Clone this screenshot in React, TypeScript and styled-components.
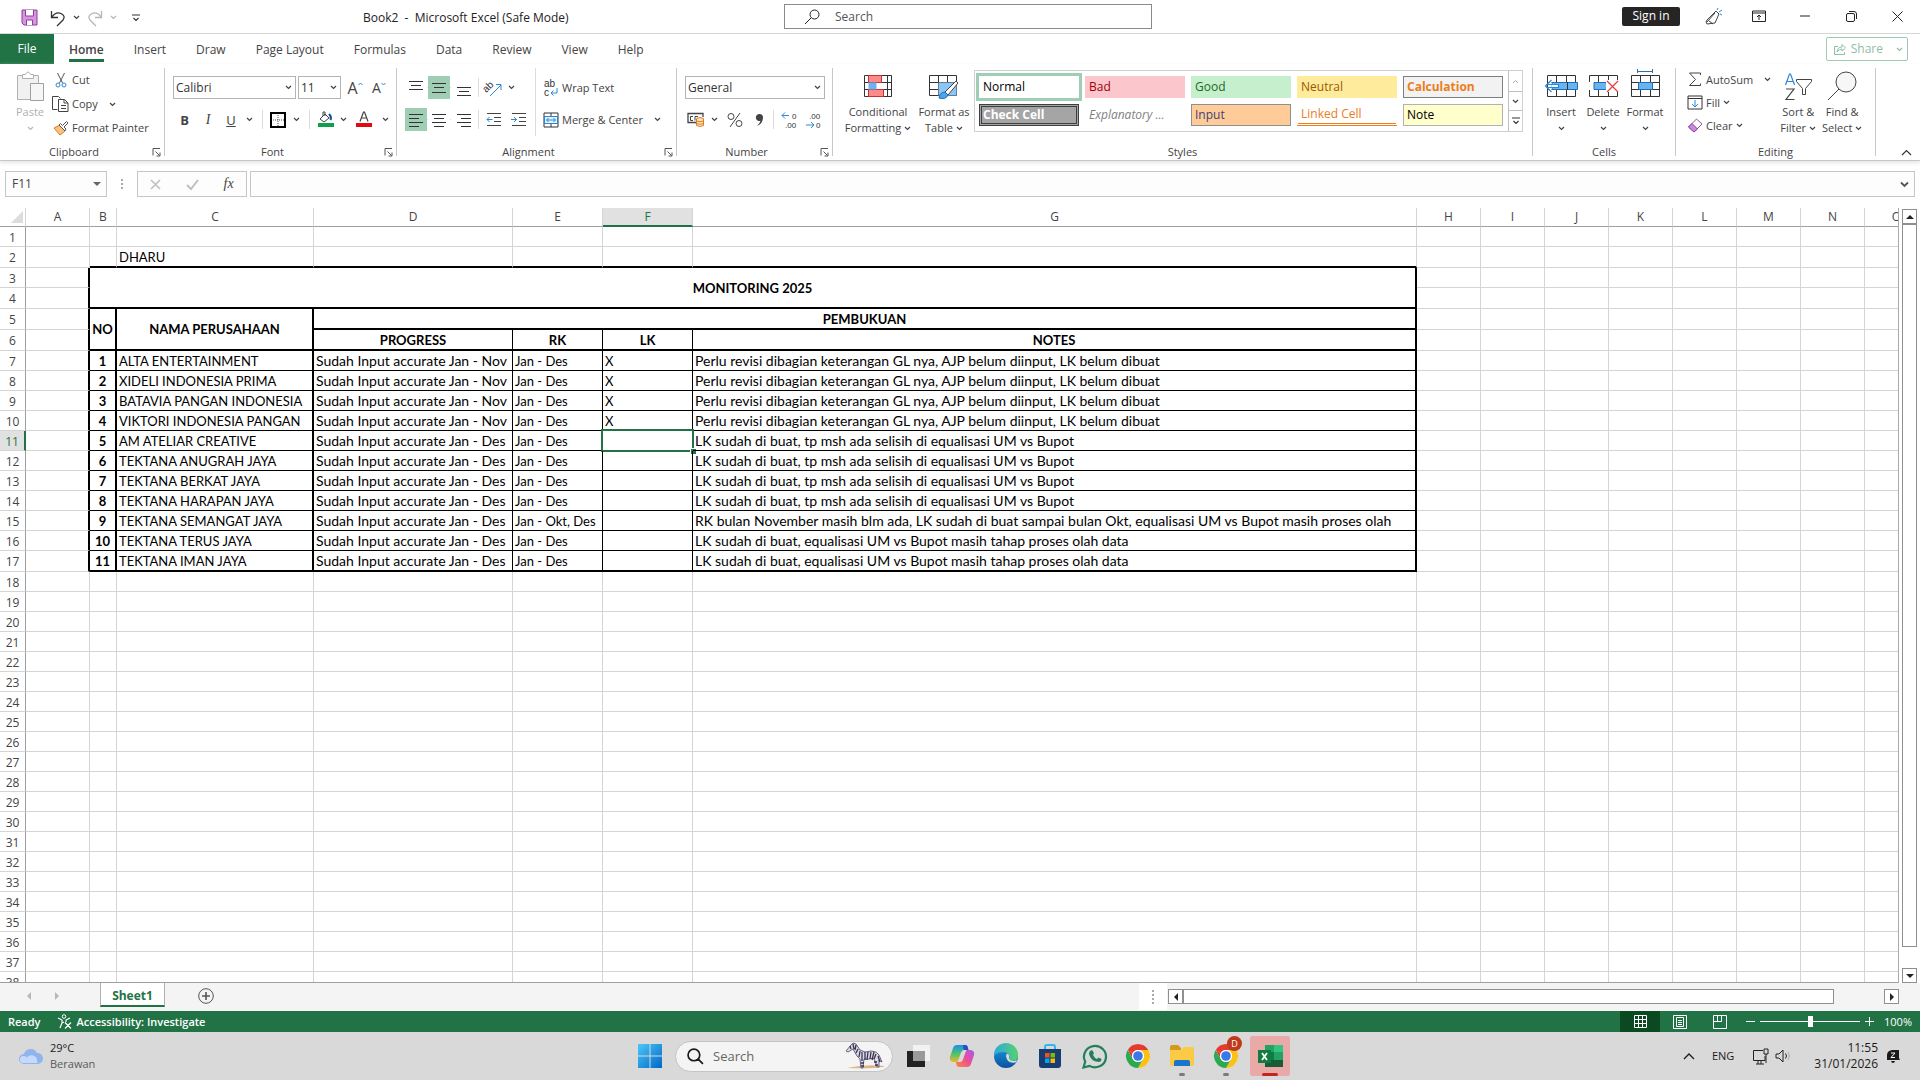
import React from "react";
import styled, { createGlobalStyle, css } from "styled-components";

const ui = `"Open Sans", "Noto Sans", "Liberation Sans", sans-serif`;
const sheetFont = `Lato, "Open Sans", "Liberation Sans", sans-serif`;
const green = "#217346";
const ink = "#444444";

const Global = createGlobalStyle`
  *, *::before, *::after { box-sizing: border-box; }
  html, body, #root { height: 100%; }
  body { margin: 0; font: 11px/16px ${ui}; color: ${ink}; background: #fff; overflow: hidden; }
  button, input, select { font: inherit; color: inherit; margin: 0; }
`;

/* ---------- shared parts ---------- */

const Window = styled.div`
  display: flex;
  flex-direction: column;
  height: 100vh;
`;
const Plain = styled.button<{ $fixed?: number }>`
  display: flex;
  align-items: center;
  justify-content: center;
  padding: 0;
  border: 0;
  background: none;
  white-space: nowrap;
  ${p => p.$fixed && css`width: ${p.$fixed}px;`}
`;
const Glyph = styled.svg`
  display: block;
  flex: none;
  fill: none;
  stroke: currentColor;
  overflow: visible;
  text { font-family: "Liberation Sans", sans-serif; stroke: none; fill: #333; }
`;
const Ico = ({ w, h, children }: { w: number; h: number; children: React.ReactNode }) => (
  <Glyph width={w} height={h} viewBox={`0 0 ${w} ${h}`} aria-hidden="true">{children}</Glyph>
);
const Chev = ({ c = ink }: { c?: string }) => (
  <Ico w={7} h={5}><path d="M1 1l2.5 2.5L6 1" stroke={c} strokeWidth="1.2" /></Ico>
);

/* ---------- title bar ---------- */

const TitleBar = styled.header`
  display: grid;
  grid-template-columns: 1fr 368px 1fr;
  height: 34px;
  flex: none;
  padding-left: 16px;
  border-bottom: 1px solid #d6d6d6;
  color: #222;
`;
const QuickAccess = styled.div`
  display: flex;
  align-items: center;
  padding: 2px 0 0 4px;
`;
const QuickButton = styled(Plain)<{ $w: number }>`
  width: ${p => p.$w}px;
  height: 22px;
`;
const DocTitle = styled.h1`
  flex: 1;
  margin: 0;
  padding-left: 208px;
  font-size: 12px;
  font-weight: 400;
  line-height: 18px;
  white-space: pre;
`;
const TitleSearch = styled.label`
  display: flex;
  align-items: center;
  gap: 15px;
  height: 25px;
  margin-top: 4px;
  padding-left: 19px;
  border: 1px solid #8a8a8a;
  input { flex: 1; border: 0; padding: 0; background: none; outline: 0; font-size: 12px; }
  input::placeholder { color: #555; opacity: 1; }
`;
const WindowTools = styled.div`
  display: flex;
  align-items: center;
  justify-content: flex-end;
  padding-bottom: 1px;
`;
const SignIn = styled(Plain)`
  width: 58px;
  height: 19px;
  margin-right: 10px;
  border-radius: 2px;
  background: #252525;
  color: #fff;
  font-size: 12px;
`;
const WinButton = styled(Plain)`
  width: 46px;
  height: 30px;
`;

/* ---------- tabs ---------- */

const TabBar = styled.nav`
  display: flex;
  height: 30px;
  flex: none;
  font-size: 12px;
  padding-right: 12px;
`;
const FileTab = styled(Plain)`
  width: 54px;
  background: ${green};
  color: #fff;
`;
const Tab = styled(Plain)<{ $on?: boolean }>`
  margin: 0 15px;
  padding-top: 1px;
  position: relative;
  ${p => p.$on && css`
    font-weight: 600;
    &::after { content: ""; position: absolute; left: 0; right: 0; bottom: 2px; height: 3px; background: ${green}; }
  `}
`;
const Share = styled(Plain)`
  gap: 5px;
  height: 24px;
  margin: 3px 0 0 auto;
  padding: 0 4px 0 7px;
  border: 1px solid #9fcdb3;
  border-radius: 2px;
  color: #8fbfa4;
  svg:last-child { margin-left: 8px; }
`;

/* ---------- ribbon ---------- */

const Ribbon = styled.section`
  display: flex;
  height: 97px;
  flex: none;
  padding-top: 4px;
  border-bottom: 1px solid #c6c6c6;
  box-shadow: 0 2px 4px #e4e4e4;
`;
const Group = styled.div<{ $w?: number }>`
  display: flex;
  flex-direction: column;
  ${p => (p.$w ? css`width: ${p.$w}px; flex: none;` : css`flex: 1;`)}
`;
const GroupBody = styled.div<{ $pad: number }>`
  display: flex;
  flex: 1;
  padding-left: ${p => p.$pad}px;
`;
const GroupLabel = styled.div`
  display: flex;
  align-items: center;
  height: 16px;
  span { flex: 1; text-align: center; }
`;
const Launcher = styled(Plain)`
  width: 16px;
  height: 16px;
`;
const Divider = styled.div`
  width: 1px;
  height: 88px;
  flex: none;
  background: #c8c8c8;
`;
const Lines = styled.div`
  display: flex;
  flex-direction: column;
  gap: 9px;
  padding-top: 8px;
`;
const Line = styled.div`
  display: flex;
  align-items: center;
  height: 23px;
`;
const Sep = styled.div<{ $h?: number; $m: number }>`
  width: 1px;
  height: ${p => p.$h || 19}px;
  margin: 0 ${p => p.$m}px;
  background: #dcdcdc;
`;
const Tool = styled(Plain)<{ $w?: number; $on?: boolean }>`
  width: ${p => p.$w || 24}px;
  height: 23px;
  font-size: 13px;
  background: ${p => (p.$on ? "#9fceb4" : "none")};
`;
const TextTool = styled(Plain)<{ $h?: number }>`
  height: ${p => p.$h || 23}px;
  gap: 3px;
  justify-content: flex-start;
`;
const IconBox = styled.span`
  display: flex;
  justify-content: center;
  width: 17px;
`;
const Tail = styled.span<{ $m: number }>`
  display: flex;
  margin-left: ${p => p.$m}px;
`;
const Stack = styled.div<{ $m: number }>`
  display: flex;
  flex-direction: column;
  margin-left: ${p => p.$m}px;
`;
const Big = styled(Plain)<{ $w: number; $dim?: boolean }>`
  flex-direction: column;
  justify-content: flex-start;
  width: ${p => p.$w}px;
  height: 76px;
  color: ${p => (p.$dim ? "#b0b0b0" : ink)};
`;
const BigIcon = styled.span`
  display: flex;
  align-items: center;
  height: 36px;
`;
const BigText = styled.span`
  display: flex;
  align-items: center;
  gap: 3px;
  height: 16px;
`;
const SelectWrap = styled.span<{ $w: number }>`
  display: flex;
  align-items: center;
  width: ${p => p.$w}px;
  height: 23px;
  margin-right: 2px;
  padding-right: 3px;
  border: 1px solid #b4b4b4;
  select { flex: 1; min-width: 0; height: 21px; padding: 0 0 0 2px; border: 0; appearance: none; background: none; color: #333; font-size: 12px; }
`;
const Letter = styled.span<{ $size: number }>`
  font-size: ${p => p.$size}px;
  line-height: 18px;
`;
const Slanted = styled.i`
  font: italic 14px/16px "Liberation Serif", serif;
`;

const Gallery = styled.div`
  display: flex;
  width: 549px;
  height: 62px;
  margin-top: 2px;
  border: 1px solid #d0d0d0;
`;
const Styles = styled.div`
  display: grid;
  flex: 1;
  grid-template-columns: repeat(5, 100px);
  grid-auto-rows: 22px;
  gap: 6px;
  padding: 5px 4px;
`;
const StyleItem = styled.button<{ $look: string }>`
  padding: 0 0 0 3px;
  border: 1px solid transparent;
  text-align: left;
  font: 12px/18px ${ui};
  white-space: nowrap;
  background: #fff;
  color: #000;
  ${p => p.$look}
`;
const Scrolls = styled.div`
  display: grid;
  grid-template-rows: 20px 19px 1fr;
  width: 14px;
  button { border-left: 1px solid #c0c0c0; }
  button + button { border-top: 1px solid #c0c0c0; }
`;
const RibbonEnd = styled.div`
  display: flex;
  width: 44px;
  align-items: flex-end;
  justify-content: flex-end;
  padding: 0 8px 4px 0;
`;

/* ---------- formula bar ---------- */

const FormulaBar = styled.section`
  display: flex;
  flex: none;
  padding: 10px 5px 11px;
  font-size: 12px;
`;
const Boxed = styled.div<{ $w?: number }>`
  display: flex;
  align-items: center;
  height: 26px;
  ${p => (p.$w ? css`width: ${p.$w}px;` : css`flex: 1;`)}
  border: 1px solid #c6c6c6;
  background: #fdfdfd;
  padding-right: 5px;
  input { flex: 1; min-width: 0; border: 0; padding: 0 6px; background: none; outline: 0; }
`;
const Dots = styled.div`
  display: flex;
  align-items: center;
  justify-content: center;
  width: 30px;
`;
const FxBox = styled(Boxed)`
  justify-content: space-around;
  margin-right: 3px;
  padding-right: 0;
`;

/* ---------- sheet ---------- */

const SheetArea = styled.main`
  display: flex;
  flex: 1;
  min-height: 0;
`;
const GridView = styled.div`
  flex: 1;
  min-width: 0;
  overflow: hidden;
  border-right: 1px solid #ababab;
  border-bottom: 1px solid #9f9f9f;
`;
const Grid = styled.table`
  width: 100%;
  min-width: 1929px;
  table-layout: fixed;
  border-collapse: separate;
  border-spacing: 0;
`;
const ColHead = styled.th<{ $on?: boolean }>`
  height: 19px;
  padding: 0;
  border-right: 1px solid #d4d4d4;
  border-bottom: 1px solid #9f9f9f;
  font: 400 12px/16px ${ui};
  svg { margin-left: auto; }
  ${p => p.$on && css`background: #e1e1e1; color: ${green}; border-bottom: 2px solid ${green};`}
`;
const RowHead = styled.th<{ $on?: boolean }>`
  padding: 2px 0 0;
  border-right: 1px solid #9f9f9f;
  border-bottom: 1px solid #d4d4d4;
  font: 400 12px/16px ${ui};
  ${p => p.$on && css`background: #e1e1e1; color: ${green}; border-right: 2px solid ${green};`}
`;
type Edge = 0 | 1 | 2;
const edge = (e: Edge) => (e === 0 ? "1px solid #d4d4d4" : `${e}px solid #000`);
const Cell = styled.td<{ $r: Edge; $b: Edge; $bold?: boolean; $mid?: boolean; $wide?: boolean }>`
  position: relative;
  padding: 0 2px;
  border-right: ${p => edge(p.$r)};
  border-bottom: ${p => edge(p.$b)};
  font: ${p => (p.$bold ? 700 : 400)} ${p => (p.$wide ? 14 : 13)}px/16px ${sheetFont};
  text-align: ${p => (p.$mid ? "center" : "left")};
  white-space: nowrap;
  color: #000;
`;
const Cursor = styled.span`
  position: absolute;
  inset: -2px;
  border: 2px solid ${green};
  &::after { content: ""; position: absolute; right: -4px; bottom: -4px; width: 6px; height: 6px; background: ${green}; border: solid #fff; border-width: 1px 0 0 1px; }
`;
const VScroll = styled.div`
  display: flex;
  flex-direction: column;
  width: 21px;
  padding: 1px 3px 0 3px;
  background: #fff;
`;
const Arrow = styled(Plain)`
  width: 15px;
  height: 15px;
  flex: none;
  border: 1px solid #8f8f8f;
  background: #fff;
  color: #222;
`;
const VThumb = styled.div`
  flex: 1;
  margin-bottom: 21px;
  border: 1px solid #8f8f8f;
  background: #fff;
`;

const SheetBar = styled.section`
  display: flex;
  height: 28px;
  flex: none;
  background: #f4f4f4;
`;
const SheetNav = styled.div`
  display: flex;
  align-items: center;
  justify-content: space-between;
  width: 100px;
  padding: 0 39px 2px 25px;
`;
const SheetTab = styled(Plain)`
  width: 65px;
  height: 24px;
  padding-top: 3px;
  border: solid #b0b0b0;
  border-width: 0 1px;
  border-bottom: 2px solid ${green};
  background: #fff;
  color: ${green};
  font-size: 12px;
  font-weight: 700;
`;
const AddSheet = styled(Plain)`
  margin-left: 33px;
  padding-bottom: 2px;
  width: 16px;
`;
const HScroll = styled.div`
  display: flex;
  align-items: center;
  width: 781px;
  margin-left: auto;
  padding: 0 21px 1px 0;
`;
const Splitter = styled.div`
  display: flex;
  align-items: center;
  justify-content: center;
  align-self: stretch;
  width: 28px;
  margin-right: 1px;
  background: #fff;
`;
const HThumb = styled.div`
  flex: 1;
  height: 15px;
  margin-right: 50px;
  border: 1px solid #8f8f8f;
  background: #fff;
`;

const StatusBar = styled.footer`
  display: flex;
  align-items: center;
  height: 21px;
  flex: none;
  padding: 0 8px;
  background: ${green};
  color: #fff;
  font-weight: 600;
`;
const Access = styled(Plain)`
  gap: 4px;
  margin-left: 17px;
`;
const Views = styled.div`
  display: flex;
  margin-left: auto;
`;
const ViewButton = styled(Plain)<{ $on?: boolean }>`
  width: 40px;
  height: 21px;
  background: ${p => (p.$on ? "#0b4a20" : "none")};
`;
const ZoomRange = styled.input`
  appearance: none;
  width: 100px;
  height: 12px;
  background: linear-gradient(#fff, #fff) center / 100% 1px no-repeat;
  &::-webkit-slider-thumb { appearance: none; width: 5px; height: 11px; background: #fff; }
`;
const ZoomText = styled.span`
  width: 34px;
  text-align: right;
  font-weight: 400;
`;

/* ---------- taskbar ---------- */

const Taskbar = styled.section`
  display: grid;
  grid-template-columns: 1fr 664px 1fr;
  height: 48px;
  flex: none;
  background: #d9d9d9;
  color: #1b1b1b;
`;
const Weather = styled(Plain)`
  justify-content: flex-start;
  gap: 6px;
  padding: 0 0 1px 18px;
  text-align: left;
  span { display: block; }
  span span + span { color: #5a5a5a; }
`;
const Apps = styled.div`
  display: flex;
  align-items: center;
`;
const AppButton = styled(Plain)<{ $on?: boolean; $mark?: string }>`
  position: relative;
  width: 44px;
  height: 40px;
  ${p => p.$on && css`padding: 0 2px; border-radius: 4px; background: #e9a9a6 content-box;`}
  ${p => p.$mark && css`
    &::after { content: ""; position: absolute; left: ${p.$on ? 14 : 19}px; bottom: 0; width: ${p.$on ? 16 : 6}px; height: 3px; border-radius: 2px; background: ${p.$mark}; }
  `}
`;
const TaskSearch = styled.label`
  display: flex;
  align-items: center;
  gap: 9px;
  width: 218px;
  height: 31px;
  margin: 0 3px;
  padding: 0 5px 0 11px;
  border: 1px solid #c4c4c4;
  border-radius: 16px;
  background: #f4f4f4;
  input { flex: 1; min-width: 0; padding: 0; border: 0; background: none; outline: 0; font-size: 13px; }
  input::placeholder { color: #666; opacity: 1; }
`;
const Tray = styled.div`
  display: flex;
  align-items: center;
  justify-content: flex-end;
  padding-right: 20px;
  gap: 8px;
`;
const TrayPair = styled(Plain)`
  gap: 6px;
  margin: 0 14px 0 10px;
`;
const Clock = styled.div`
  font-size: 12px;
  text-align: right;
`;

/* ---------- drawings ---------- */

const LauncherIcon = () => (
  <Ico w={9} h={9}><path d="M1 7.5V.5h7M3.5 3.5l4 4M8 4.5V8H4.5" stroke="#555" /></Ico>
);
const AlignIcon = ({ rows }: { rows: number[][] }) => (
  <Ico w={16} h={20}>{rows.map(([y, x1, x2]) => <path key={y} d={`M${x1} ${y}.5H${x2}`} stroke="#333" />)}</Ico>
);
const IndentIcon = ({ out }: { out?: boolean }) => (
  <Ico w={16} h={15}>
    <path d="M1 1.5h14M8 5.5h7M8 9.5h7M1 13.5h14" stroke="#444" />
    <path d={out ? "M6.500 7.500H1M3.500 5L1 7.500 3.500 10" : "M0 7.500h5.500M3 5l2.500 2.500L3 10"} stroke="#2b88d8" />
  </Ico>
);
const TableIcon = ({ kind }: { kind: "insert" | "delete" | "format" }) => (
  <Ico w={34} h={36}>
    {kind === "format" && <path d="M9.500 1v4M24.500 1v4M9.500 3.500h15" stroke="#2b6ea8" />}
    <path d="M3.500 7.500h28v21h-28zM3.500 14.500h28M3.500 21.500h28M12.500 7.500v21M22.500 7.500v21" stroke="#333" />
    {kind === "insert" && <><path d="M8 14.500h25.500v7H8z" fill="#69b3f0" stroke="#1e6fb8" /><path d="M23.500 14v8" stroke="#333" /><path d="M7.500 12L1.500 18l6 6M2 16.500h12.500v3H2" fill="#fff" stroke="#2b88d8" strokeWidth="1.200" /></>}
    {kind === "delete" && <><path d="M1 14h7v8H1z" fill="#fff" stroke="none" /><path d="M8 14.500h14v7H8z" fill="#69b3f0" stroke="#1e6fb8" /><path d="M20 12h14v12H20z" fill="#fff" stroke="none" /><path d="M21 13l11 11M32 13L21 24" stroke="#e8403a" strokeWidth="1.300" /></>}
    {kind === "format" && <path d="M10.500 14.500h14v7h-14z" fill="#69b3f0" stroke="#1e6fb8" />}
  </Ico>
);
const Search = ({ s = 16, flip }: { s?: number; flip?: boolean }) => (
  <Glyph width={s} height={s} viewBox="0 0 16 16" aria-hidden="true">
    {flip ? <path d="M10.500 10.500L15 15M12 6.500a5.500 5.500 0 1 1-11 0 5.500 5.500 0 0 1 11 0z" strokeWidth="1.600" />
      : <path d="M7 9L1 15M15 5.500a4.500 4.500 0 1 1-9 0 4.500 4.500 0 0 1 9 0z" />}
  </Glyph>
);
const Tri = ({ d, c }: { d: "l" | "r" | "u" | "d"; c?: string }) => {
  const p = { l: "M6 0v8L2 4z", r: "M2 0v8l4-4z", u: "M0 6h8L4 2z", d: "M0 2h8L4 6z" }[d];
  return <Ico w={8} h={8}><path d={p} fill={c || "#222"} stroke="none" /></Ico>;
};
const Badge = styled.span`
  position: absolute;
  top: 0;
  right: 6px;
  width: 15px;
  height: 15px;
  border-radius: 50%;
  background: #c0391b;
  color: #fff;
  font: 9px/15px ${ui};
`;
const ChromeIcon = () => (
  <Ico w={30} h={30}>
    <g stroke="none">
      <circle cx="15" cy="15" r="12" fill="#fff" />
      <path d="M4.600 9A12 12 0 0 1 25.400 9H15a6 6 0 0 0-5.200 3z" fill="#e33b2e" />
      <path d="M4.600 9l5.200 9a6 6 0 0 1 0-6z" fill="#e33b2e" />
      <path d="M25.400 9A12 12 0 0 1 15 27l5.200-9A6 6 0 0 0 15 9z" fill="#fbc116" />
      <path d="M4.600 9A12 12 0 0 0 15 27l5.200-9A6 6 0 0 1 9.800 18z" fill="#2da94f" />
      <circle cx="15" cy="15" r="6" fill="#fff" /><circle cx="15" cy="15" r="4.800" fill="#3b78e7" />
    </g>
  </Ico>
);
const Zebra = () => (
  <Ico w={42} h={27}>
    <path d="M2 25q18-4 38-2-4 3-38 2z" fill="#dcb58a" stroke="none" />
    <path d="M1 8l5-6 2-2 3 1 4 6 5 2q7-2 11 0l3 3 3 7-3-2v7h-2l-2-6-2-3q-5 2-9 1l-1 9h-2l-1-9-3-3-4-7-5 3z" fill="#dcdae6" stroke="#4a4263" strokeWidth=".8" />
    <path d="M5 3l1 3M8 1l1 5M11 2l-1 5M13 6l-2 4M15 8l-1 6M17 9v9M20 9v8M23 9l-1 8M26 9l-1 7M29 9l-2 8M31 11l-2 5M33 13l2 6M16 20h3M16 23h3M29 19h3M30 22h3" stroke="#3b3354" strokeWidth="1.300" />
  </Ico>
);

/* ---------- data ---------- */

const inputNov = "Sudah Input accurate Jan - Nov";
const inputDes = "Sudah Input accurate Jan - Des";
const noteRevisi = "Perlu revisi dibagian keterangan GL nya, AJP belum diinput, LK belum dibuat";
const noteSelisih = "LK sudah di buat, tp msh ada selisih di equalisasi UM vs Bupot";
const noteProses = "LK sudah di buat, equalisasi UM vs Bupot masih tahap proses olah data";
const companies: [string, string, string, string, string][] = [
  ["ALTA ENTERTAINMENT", inputNov, "Jan - Des", "X", noteRevisi],
  ["XIDELI INDONESIA PRIMA", inputNov, "Jan - Des", "X", noteRevisi],
  ["BATAVIA PANGAN INDONESIA", inputNov, "Jan - Des", "X", noteRevisi],
  ["VIKTORI INDONESIA PANGAN", inputNov, "Jan - Des", "X", noteRevisi],
  ["AM ATELIAR CREATIVE", inputDes, "Jan - Des", "", noteSelisih],
  ["TEKTANA ANUGRAH JAYA", inputDes, "Jan - Des", "", noteSelisih],
  ["TEKTANA BERKAT JAYA", inputDes, "Jan - Des", "", noteSelisih],
  ["TEKTANA HARAPAN JAYA", inputDes, "Jan - Des", "", noteSelisih],
  ["TEKTANA SEMANGAT JAYA", inputDes, "Jan - Okt, Des", "", "RK bulan November masih blm ada, LK sudah di buat sampai bulan Okt, equalisasi UM vs Bupot masih proses olah"],
  ["TEKTANA TERUS JAYA", inputDes, "Jan - Des", "", noteProses],
  ["TEKTANA IMAN JAYA", inputDes, "Jan - Des", "", noteProses],
];
const colWidths = [26, 64, 27, 197, 199, 90, 90, 724, 64, 64, 64, 64, 64, 64, 64, 64];
const letters = "ABCDEFGHIJKLMNO".split("");
const rowHeight = (r: number) => ([2, 4, 5, 6, 17].includes(r) ? 21 : 20);

const galleryItems: [string, string][] = [
  ["Normal", "box-shadow: 0 0 0 3px #9fceb4;"],
  ["Bad", "background: #fcc6cd; color: #9c0006;"],
  ["Good", "background: #c6efce; color: #1c6b23;"],
  ["Neutral", "background: #ffeb9c; color: #9c5700;"],
  ["Calculation", "background: #f2f2f2; color: #ec7d1b; border-color: #7f7f7f; font-weight: 700;"],
  ["Check Cell", "background: #a5a5a5; color: #fff; border: 3px double #3f3f3f; padding-left: 1px; line-height: 14px; font-weight: 700;"],
  ["Explanatory ...", "color: #7f7f7f; font-style: italic;"],
  ["Input", "background: #ffcc99; color: #3f3f76; border-color: #8f8f8f;"],
  ["Linked Cell", "color: #ec7d1b; border-bottom: 3px double #ec7d1b;"],
  ["Note", "background: #ffffcc; border-color: #b2b2b2;"],
];

/* ---------- sections ---------- */

const range = (n: number) => Array.from({ length: n }, (_, i) => i);
const blank = (n: number, first: Edge = 0, bottom: Edge = 0) =>
  range(n).map(i => <Cell key={i} $r={i === 0 ? first : 0} $b={bottom} />);

function Row({ r }: { r: number }) {
  const co = companies[r - 7];
  const b: Edge = r === 17 ? 2 : 1;
  let cells: React.ReactNode = blank(15);
  if (r === 2) {
    cells = <>{blank(1)}<Cell $r={0} $b={2} /><Cell $r={0} $b={2}>DHARU</Cell>{blank(4, 0, 2)}{blank(8)}</>;
  } else if (r === 3) {
    cells = <>{blank(1, 2)}<Cell $r={2} $b={2} $bold $mid colSpan={6} rowSpan={2}>MONITORING 2025</Cell>{blank(8)}</>;
  } else if (r === 4) {
    cells = <>{blank(1, 2)}{blank(8)}</>;
  } else if (r === 5) {
    cells = <>{blank(1, 2)}<Cell $r={2} $b={2} $bold $mid rowSpan={2}>NO</Cell><Cell $r={2} $b={2} $bold $mid rowSpan={2}>NAMA PERUSAHAAN</Cell><Cell $r={2} $b={2} $bold $mid colSpan={4}>PEMBUKUAN</Cell>{blank(8)}</>;
  } else if (r === 6) {
    cells = <>{blank(1, 2)}<Cell $r={1} $b={2} $bold $mid>PROGRESS</Cell><Cell $r={1} $b={2} $bold $mid>RK</Cell><Cell $r={1} $b={2} $bold $mid>LK</Cell><Cell $r={2} $b={2} $bold $mid>NOTES</Cell>{blank(8)}</>;
  } else if (co) {
    cells = (
      <>
        {blank(1, 2)}
        <Cell $r={2} $b={b} $bold $mid>{r - 6}</Cell>
        <Cell $r={2} $b={b}>{co[0]}</Cell>
        <Cell $r={1} $b={b} $wide>{co[1]}</Cell>
        <Cell $r={1} $b={b}>{co[2]}</Cell>
        <Cell $r={1} $b={b}>{co[3]}{r === 11 && <Cursor />}</Cell>
        <Cell $r={2} $b={b} $wide>{co[4]}</Cell>
        {blank(8)}
      </>
    );
  }
  return <tr style={{ height: rowHeight(r) }}><RowHead scope="row" $on={r === 11}>{r}</RowHead>{cells}</tr>;
}

function RibbonView() {
  return (
    <Ribbon>
      <Group $w={164}>
        <GroupBody $pad={12}>
          <Big $w={36} $dim>
            <BigIcon>
              <Ico w={28} h={30}>
                <path d="M1.500 4.500h21v24h-21z" fill="#f1f1f1" stroke="#b0b0b0" />
                <path d="M6.500 7.500v-4h3q2.500-5 5 0h3v4z" fill="#fff" stroke="#b0b0b0" />
                <path d="M14.500 12.500h13v17h-13z" fill="#f6f6f6" stroke="#a0a0a0" />
              </Ico>
            </BigIcon>
            <BigText>Paste</BigText><BigText><Chev c="#b8b8b8" /></BigText>
          </Big>
          <Stack $m={4}>
            <TextTool $h={24}><IconBox><Ico w={12} h={16}><path d="M2.500 1l5 10M9.500 1l-5 10" stroke="#555" /><circle cx="3" cy="13" r="2" stroke="#2b88d8" /><circle cx="9" cy="13" r="2" stroke="#2b88d8" /></Ico></IconBox>Cut</TextTool>
            <TextTool $h={24}><IconBox><Ico w={17} h={16}><path d="M5.500 13.500h-5V.5h6l2 2M6.500 3.500h6l3.500 3.500v8.500H6.500zM12 3.500V7h4M9 9.500h5M9 12.500h5" stroke="#444" /></Ico></IconBox>Copy<Tail $m={8}><Chev /></Tail></TextTool>
            <TextTool $h={24}><IconBox><Ico w={16} h={15}><path d="M1 7l6 7 5-4-5-6z" fill="#f9c27c" stroke="#e07b1a" /><path d="M6 4l6 6 1-2-2-2 4-4-1.500-1.500-4 4-2-2z" fill="#fff" stroke="#555" /></Ico></IconBox>Format Painter</TextTool>
          </Stack>
        </GroupBody>
        <GroupLabel><span>Clipboard</span><Launcher aria-label="Clipboard settings"><LauncherIcon /></Launcher></GroupLabel>
      </Group>
      <Divider />
      <Group $w={231}>
        <GroupBody $pad={8}>
          <Lines>
            <Line>
              <SelectWrap $w={123}><select aria-label="Font"><option>Calibri</option></select><Chev /></SelectWrap>
              <SelectWrap $w={43}><select aria-label="Font size"><option>11</option></select><Chev /></SelectWrap>
              <Tool aria-label="Increase font size"><Letter $size={16}>A</Letter><Ico w={5} h={14}><path d="M.5 4L2.500 2 4.500 4" stroke="#2b88d8" /></Ico></Tool>
              <Tool aria-label="Decrease font size"><Letter $size={14}>A</Letter><Ico w={5} h={14}><path d="M.5 2L2.500 4 4.500 2" stroke="#2b88d8" /></Ico></Tool>
            </Line>
            <Line>
              <Tool $w={23}><b>B</b></Tool>
              <Tool $w={24}><Slanted>I</Slanted></Tool>
              <Tool $w={22}><u>U</u></Tool>
              <Tool $w={14} aria-label="Underline options"><Chev /></Tool>
              <Sep $m={6} />
              <Tool $w={18} aria-label="Borders"><Ico w={16} h={16}><path d="M1 1h14v14H1z" stroke="#000" strokeWidth="2" /><path d="M8 3v11M3 8h11" stroke="#555" strokeDasharray="1 1" /></Ico></Tool>
              <Tool $w={18} aria-label="Border options"><Chev /></Tool>
              <Sep $m={4} />
              <Tool $w={22} aria-label="Fill colour"><Ico w={17} h={17}><path d="M3 8l5-5 4 4-5 4z" stroke="#444" /><path d="M6 5V1h2v4" stroke="#444" /><path d="M12 3q3 3 1.500 6" stroke="#1b4f9c" strokeWidth="2" /><path d="M1 12h16v4H1z" fill="#0ea04f" stroke="none" /></Ico></Tool>
              <Tool $w={14} aria-label="Fill colour options"><Chev /></Tool>
              <Tool $w={28} aria-label="Font colour"><Ico w={16} h={17}><path d="M0 12h16v4H0z" fill="#e00b12" stroke="none" /><path d="M4 10.500L7.500 1h1l3.500 9.500M5.500 7h5" stroke="#444" strokeWidth="1.200" /></Ico></Tool>
              <Tool $w={14} aria-label="Font colour options"><Chev /></Tool>
            </Line>
          </Lines>
        </GroupBody>
        <GroupLabel><span>Font</span><Launcher aria-label="Font settings"><LauncherIcon /></Launcher></GroupLabel>
      </Group>
      <Divider />
      <Group $w={279}>
        <GroupBody $pad={8}>
          <Lines>
            <Line>
              <Tool $w={22} aria-label="Top align"><AlignIcon rows={[[3, 1, 15], [7, 3, 13], [11, 1, 15]]} /></Tool>
              <Sep $m={0} $h={1} />
              <Tool $w={22} $on aria-label="Middle align"><AlignIcon rows={[[5, 1, 15], [9, 3, 13], [14, 1, 15]]} /></Tool>
              <Sep $m={0} $h={1} />
              <Tool $w={26} aria-label="Bottom align"><AlignIcon rows={[[9, 1, 15], [13, 3, 13], [17, 1, 15]]} /></Tool>
              <Sep $m={1} />
              <Tool $w={26} aria-label="Orientation"><Ico w={18} h={18}><path d="M6 17L17 6M12 5.500h5V11" stroke="#2b88d8" /><text x="1" y="13" fontSize="10" transform="rotate(-45 3 12)">ab</text></Ico></Tool>
              <Tool $w={10} aria-label="Orientation options"><Chev /></Tool>
            </Line>
            <Line>
              <Tool $w={22} $on aria-label="Align left"><AlignIcon rows={[[4, 1, 15], [8, 1, 11], [12, 1, 15], [16, 1, 11]]} /></Tool>
              <Sep $m={0} $h={1} />
              <Tool $w={22} aria-label="Centre"><AlignIcon rows={[[4, 1, 15], [8, 3, 13], [12, 1, 15], [16, 3, 13]]} /></Tool>
              <Sep $m={0} $h={1} />
              <Tool $w={26} aria-label="Align right"><AlignIcon rows={[[4, 1, 15], [8, 5, 15], [12, 1, 15], [16, 5, 15]]} /></Tool>
              <Sep $m={1} />
              <Tool $w={27} aria-label="Decrease indent"><IndentIcon out /></Tool>
              <Tool $w={24} aria-label="Increase indent"><IndentIcon /></Tool>
            </Line>
          </Lines>
          <Stack $m={4}><Sep $h={68} $m={0} /></Stack>
          <Stack $m={6}>
            <Lines>
              <TextTool><IconBox><Ico w={15} h={18}><text x="1" y="8" fontSize="10">ab</text><text x="1" y="17" fontSize="10">c</text><path d="M14 9v5H8M10.500 11.500L8 14l2.500 2.500" stroke="#2b88d8" /></Ico></IconBox>Wrap Text</TextTool>
              <TextTool><IconBox><Ico w={16} h={16}><path d="M1 1h14v14H1zM1 4.500h14M1 11.500h14M8 1v3.500M8 11.500V15" stroke="#333" /><path d="M1.500 4.500h13v7h-13z" fill="#e4f1fb" stroke="#2b88d8" /><path d="M3.500 8h9M5.500 6l-2 2 2 2M10.500 6l2 2-2 2" stroke="#2b88d8" /></Ico></IconBox>Merge &amp; Center<Tail $m={8}><Chev /></Tail></TextTool>
            </Lines>
          </Stack>
        </GroupBody>
        <GroupLabel><span>Alignment</span><Launcher aria-label="Alignment settings"><LauncherIcon /></Launcher></GroupLabel>
      </Group>
      <Divider />
      <Group $w={155}>
        <GroupBody $pad={8}>
          <Lines>
            <Line><SelectWrap $w={140}><select aria-label="Number format"><option>General</option></select><Chev /></SelectWrap></Line>
            <Line>
              <Tool $w={22} aria-label="Accounting format"><Ico w={18} h={15}><path d="M9 10.500H1V1.500h15V5" stroke="#444" strokeWidth="1.300" /><path d="M6 4.500H3.500v4H6M8 8.500v-4h3" stroke="#444" /><path d="M9.500 6.500q3.500-2 7 0v7q-3.500 2-7 0zM9.500 9q3.500 1.500 7 0M9.500 11.500q3.500 1.500 7 0" fill="#fde3c3" stroke="#e07b1a" /></Ico></Tool>
              <Tool $w={14} aria-label="Accounting options"><Chev /></Tool>
              <Tool $w={28} aria-label="Percent style"><Ico w={16} h={16}><circle cx="4" cy="4.500" r="3" stroke="#444" /><circle cx="12" cy="11.500" r="3" stroke="#444" /><path d="M13 1L3 15" stroke="#444" /></Ico></Tool>
              <Tool $w={20} aria-label="Comma style"><Ico w={9} h={14}><path d="M4.500 1a3.500 3.500 0 1 0 1 6.800Q5 10.500 2 13q6-2.500 6-8.500A3.500 3.500 0 0 0 4.500 1z" fill="#444" stroke="none" /></Ico></Tool>
              <Sep $m={4} />
              <Tool aria-label="Increase decimal"><Ico w={18} h={18}><path d="M8 4.500H1M4 1.500l-3 3 3 3" stroke="#2b88d8" /><text x="11" y="8" fontSize="8">0</text><text x="4" y="17" fontSize="8">.00</text></Ico></Tool>
              <Tool aria-label="Decrease decimal"><Ico w={18} h={18}><path d="M1 14h8M6 11l3 3-3 3" stroke="#2b88d8" /><text x="4" y="8" fontSize="8">.00</text><text x="11" y="17" fontSize="8">0</text></Ico></Tool>
            </Line>
          </Lines>
        </GroupBody>
        <GroupLabel><span>Number</span><Launcher aria-label="Number settings"><LauncherIcon /></Launcher></GroupLabel>
      </Group>
      <Divider />
      <Group>
        <GroupBody $pad={8}>
          <Big $w={74}>
            <BigIcon><Ico w={30} h={26}><path d="M1.500 2.500h27v21h-27zM1.500 9.500h27M1.500 16.500h27M24.500 2.500v21" stroke="#333" /><path d="M5.500 2.500h13v7h-13zM5.500 16.500h15v7h-15z" fill="#fb8a8a" stroke="#c93030" /><path d="M5.500 9.500h8v7h-8z" fill="#69b3f0" stroke="none" /></Ico></BigIcon>
            <BigText>Conditional</BigText><BigText>Formatting <Chev /></BigText>
          </Big>
          <Big $w={58}>
            <BigIcon><Ico w={32} h={28}><path d="M1.500 3.500h27v20h-27zM1.500 10.500h27M1.500 17.500h27M10.500 3.500v20M19.500 3.500v20" stroke="#333" /><path d="M10.500 10.500h18v13h-18z" fill="#8cc6f5" stroke="none" /><path d="M28 9L17 20l3 3L30 11z" fill="#fff" stroke="#444" /><path d="M17 20q-5 0-6 6 7 2 9-3z" fill="#4fa3e8" stroke="#1e6fb8" /></Ico></BigIcon>
            <BigText>Format as</BigText><BigText>Table <Chev /></BigText>
          </Big>
          <Stack $m={1}>
            <Gallery>
              <Styles>{galleryItems.map(([name, look]) => <StyleItem key={name} $look={look}>{name}</StyleItem>)}</Styles>
              <Scrolls>
                <Plain aria-label="Previous styles"><Ico w={7} h={5}><path d="M1 4l2.500-2.500L6 4" stroke="#aaa" /></Ico></Plain>
                <Plain aria-label="Next styles"><Chev /></Plain>
                <Plain aria-label="More styles"><Ico w={8} h={8}><path d="M0 1h8M1.500 4L4 6.500 6.500 4" stroke="#333" strokeWidth="1.200" /></Ico></Plain>
              </Scrolls>
            </Gallery>
          </Stack>
        </GroupBody>
        <GroupLabel><span>Styles</span></GroupLabel>
      </Group>
      <Divider />
      <Group $w={142}>
        <GroupBody $pad={7}>
          <Big $w={42}><BigIcon><TableIcon kind="insert" /></BigIcon><BigText>Insert</BigText><BigText><Chev /></BigText></Big>
          <Big $w={42}><BigIcon><TableIcon kind="delete" /></BigIcon><BigText>Delete</BigText><BigText><Chev /></BigText></Big>
          <Big $w={42}><BigIcon><TableIcon kind="format" /></BigIcon><BigText>Format</BigText><BigText><Chev /></BigText></Big>
        </GroupBody>
        <GroupLabel><span>Cells</span></GroupLabel>
      </Group>
      <Divider />
      <Group $w={199}>
        <GroupBody $pad={10}>
          <Stack $m={0}>
            <TextTool><IconBox><Ico w={14} h={15}><path d="M12.500 3V1h-11l6 6.500-6 6h11v-2" stroke="#444" /></Ico></IconBox>AutoSum<Tail $m={8}><Chev /></Tail></TextTool>
            <TextTool><IconBox><Ico w={16} h={15}><path d="M1 1h14v13H1zM1 3.500h14" stroke="#333" /><path d="M8 5v7M5 9l3 3 3-3" stroke="#2b88d8" /></Ico></IconBox>Fill <Chev /></TextTool>
            <TextTool><IconBox><Ico w={16} h={15}><path d="M9.500 1L15 6l-8 8-5.500-5z" stroke="#8a5a9e" fill="#fff" /><path d="M5 5.500L10.500 11 7 14 1.500 9z" fill="#c98bdc" stroke="#8a3fa0" /></Ico></IconBox>Clear <Chev /></TextTool>
          </Stack>
          <Stack $m={5}>
            <Big $w={44}>
              <BigIcon><Ico w={29} h={29}><path d="M1.500 13L5.500 2h1l4 11M3 9.500h6" stroke="#2b88d8" strokeWidth="1.200" /><path d="M2 17h8L2 27.500h8.500" stroke="#444" strokeWidth="1.200" /><path d="M12.500 7.500h15v2l-6 7v6h-3v-6l-6-7z" stroke="#444" /></Ico></BigIcon>
              <BigText>Sort &amp;</BigText><BigText>Filter <Chev /></BigText>
            </Big>
          </Stack>
          <Big $w={44}>
            <BigIcon><Ico w={30} h={30}><circle cx="19" cy="11" r="10" fill="#f7f7f7" stroke="#444" /><path d="M12 18L1 29" stroke="#444" /></Ico></BigIcon>
            <BigText>Find &amp;</BigText><BigText>Select <Chev /></BigText>
          </Big>
        </GroupBody>
        <GroupLabel><span>Editing</span></GroupLabel>
      </Group>
      <Divider />
      <RibbonEnd><Plain aria-label="Collapse ribbon"><Ico w={11} h={7}><path d="M1 6l4.500-4.500L10 6" stroke="#333" strokeWidth="1.200" /></Ico></Plain></RibbonEnd>
    </Ribbon>
  );
}

export default function App() {
  return (
    <Window>
      <Global />
      <TitleBar>
        <QuickAccess>
          <QuickButton $w={18} aria-label="Save"><Ico w={17} h={17}><path d="M1 1h15v15H3l-2-2z" fill="#d894e0" stroke="#8a3fa0" /><path d="M4.500 1v6h8V1" fill="#fff" stroke="#8a3fa0" /><path d="M5.500 16v-5h6v5" fill="#fff" stroke="#8a3fa0" /></Ico></QuickButton>
          <Tail $m={5}><QuickButton $w={30} aria-label="Undo"><Ico w={16} h={16}><path d="M1.500 1v6.500H8M1.500 7.500Q6 1 11 3.500t2 6.500l-6 6" stroke="#333" strokeWidth="1.300" /></Ico></QuickButton></Tail>
          <Chev />
          <QuickButton $w={30} aria-label="Redo"><Ico w={16} h={16}><path d="M14.500 1v6.500H8M14.500 7.500Q10 1 5 3.500T3 10l6 6" stroke="#b5b5b5" strokeWidth="1.300" /></Ico></QuickButton>
          <Chev c="#b5b5b5" />
          <QuickButton $w={38} aria-label="Customize quick access"><Ico w={8} h={8}><path d="M0 1h8M1.500 4L4 6.500 6.500 4" stroke="#333" strokeWidth="1.200" /></Ico></QuickButton>
          <DocTitle>Book2  -  Microsoft Excel (Safe Mode)</DocTitle>
        </QuickAccess>
        <TitleSearch><Search /><input placeholder="Search" aria-label="Search" /></TitleSearch>
        <WindowTools>
          <SignIn>Sign in</SignIn>
          <WinButton aria-label="What is new"><Ico w={17} h={17}><path d="M2 12L11 3l3 3-4 9-8 1-1-2zM4 13l4 3M10 5l-8 9" stroke="#444" /><path d="M12 2l1-2M14 4l3-2M15 6l2 1" stroke="#2b88d8" /></Ico></WinButton>
          <WinButton aria-label="Ribbon display"><Ico w={14} h={12}><path d="M.5 1h13v10.500H.5zM.5 3h13M7 10V5M5 7l2-2 2 2" stroke="#222" /></Ico></WinButton>
          <WinButton aria-label="Minimise"><Ico w={10} h={10}><path d="M0 5h10" stroke="#222" /></Ico></WinButton>
          <WinButton aria-label="Restore"><Ico w={11} h={11}><path d="M.5 4q0-1.500 1.500-1.500h5Q8.500 2.500 8.500 4v5q0 1.500-1.500 1.500H2Q.5 10.500.5 9zM3 .5h5q2.500 0 2.500 2.500v5" stroke="#222" /></Ico></WinButton>
          <WinButton aria-label="Close"><Ico w={11} h={11}><path d="M.5.5l10 10M10.500.5l-10 10" stroke="#222" /></Ico></WinButton>
        </WindowTools>
      </TitleBar>

      <TabBar>
        <FileTab>File</FileTab>
        {["Home", "Insert", "Draw", "Page Layout", "Formulas", "Data", "Review", "View", "Help"].map(t => <Tab key={t} $on={t === "Home"}>{t}</Tab>)}
        <Share><Ico w={12} h={12}><path d="M4 3.500H.5v8h10V9M3 9q.500-5 5-5V1.500l3.500 3.500L8 8V6Q5 6 3 9z" /></Ico>Share<Chev c="#8fbfa4" /></Share>
      </TabBar>

      <RibbonView />

      <FormulaBar>
        <Boxed $w={102}><input aria-label="Name box" defaultValue="F11" /><Tri d="d" c="#666" /></Boxed>
        <Dots><Ico w={2} h={12}><path d="M1 1v2M1 5v2M1 9v2" stroke="#aaa" strokeWidth="2" /></Ico></Dots>
        <FxBox $w={110}>
          <Plain aria-label="Cancel"><Ico w={11} h={11}><path d="M1 1l9 9M10 1l-9 9" stroke="#c0c0c0" strokeWidth="1.600" /></Ico></Plain>
          <Plain aria-label="Enter"><Ico w={13} h={11}><path d="M1 6l4 4 7-9" stroke="#c0c0c0" strokeWidth="2" /></Ico></Plain>
          <Plain aria-label="Insert function"><Slanted>fx</Slanted></Plain>
        </FxBox>
        <Boxed><input aria-label="Formula" /><Ico w={9} h={7}><path d="M1 1.500L4.500 5 8 1.500" stroke="#555" strokeWidth="1.800" /></Ico></Boxed>
      </FormulaBar>

      <SheetArea>
        <GridView>
          <Grid>
            <colgroup>{colWidths.map((w, i) => <col key={i} style={{ width: w }} />)}</colgroup>
            <thead>
              <tr>
                <ColHead aria-label="Select all"><Ico w={14} h={12}><path d="M12 0v12H0z" fill="#dcdcdc" stroke="none" /></Ico></ColHead>
                {letters.map(l => <ColHead key={l} scope="col" $on={l === "F"}>{l}</ColHead>)}
              </tr>
            </thead>
            <tbody>{range(38).map(i => <Row key={i} r={i + 1} />)}</tbody>
          </Grid>
        </GridView>
        <VScroll>
          <Arrow aria-label="Scroll up"><Tri d="u" /></Arrow>
          <VThumb />
          <Arrow aria-label="Scroll down"><Tri d="d" /></Arrow>
        </VScroll>
      </SheetArea>

      <SheetBar>
        <SheetNav>
          <Plain aria-label="Previous sheet"><Tri d="l" c="#b8b8b8" /></Plain>
          <Plain aria-label="Next sheet"><Tri d="r" c="#b8b8b8" /></Plain>
        </SheetNav>
        <SheetTab>Sheet1</SheetTab>
        <AddSheet aria-label="New sheet"><Ico w={16} h={16}><circle cx="8" cy="8" r="7.300" stroke="#555" /><path d="M8 4v8M4 8h8" stroke="#555" strokeWidth="1.600" /></Ico></AddSheet>
        <HScroll>
          <Splitter><Ico w={2} h={14}><path d="M1 0v2M1 4v2M1 8v2M1 12v2" stroke="#aaa" strokeWidth="2" /></Ico></Splitter>
          <Arrow aria-label="Scroll left"><Tri d="l" /></Arrow>
          <HThumb />
          <Arrow aria-label="Scroll right"><Tri d="r" /></Arrow>
        </HScroll>
      </SheetBar>

      <StatusBar>
        Ready
        <Access><Ico w={15} h={15}><circle cx="7" cy="2.500" r="1.800" stroke="#fff" /><path d="M1 4l4 2v3l-2 5M13 4L9 6v2M5 9l2-1M8 8.500l6 6M14 8.500l-6 6" stroke="#fff" strokeWidth="1.200" /></Ico>Accessibility: Investigate</Access>
        <Views>
          <ViewButton $on aria-label="Normal view"><Ico w={13} h={13}><path d="M.5.5h12v12H.5zM4.500.5v12M8.500.5v12M.5 4.500h12M.5 8.500h12" stroke="#fff" /></Ico></ViewButton>
          <ViewButton aria-label="Page layout view"><Ico w={14} h={14}><path d="M.5.500h13v13H.5zM3.500 2.500h7v9h-7zM5 5.500h4M5 7.500h4M5 9.500h4" stroke="#fff" /></Ico></ViewButton>
          <ViewButton aria-label="Page break view"><Ico w={14} h={14}><path d="M.5.500h13v13H.5zM4.500.5v6M8.500.5v6M.5 6.500h8" stroke="#fff" /></Ico></ViewButton>
        </Views>
        <Plain $fixed={20} aria-label="Zoom out"><Ico w={9} h={9}><path d="M0 4.500h9" stroke="#fff" /></Ico></Plain>
        <ZoomRange type="range" aria-label="Zoom" defaultValue={50} />
        <Plain $fixed={18} aria-label="Zoom in"><Ico w={9} h={9}><path d="M0 4.500h9M4.500 0v9" stroke="#fff" /></Ico></Plain>
        <ZoomText>100%</ZoomText>
      </StatusBar>

      <Taskbar>
        <Weather>
          <Ico w={26} h={18}><path d="M6 17a5 5 0 0 1 0-10 7 7 0 0 1 13-1 5.500 5.500 0 0 1 1 11z" fill="#8fb4ee" stroke="none" /><path d="M5 16a3.500 3.500 0 0 1 1-7q2 0 3 1.500 2-3 6-2t4 4.500 2 3z" fill="#c6d9fa" stroke="none" /></Ico>
          <span><span>29°C</span><span>Berawan</span></span>
        </Weather>
        <Apps>
          <AppButton aria-label="Start"><Ico w={24} h={24}><path d="M0 0h11.500v11.500H0zM12.500 0H24v11.500H12.500zM0 12.500h11.500V24H0zM12.500 12.500H24V24H12.500z" fill="url(#win)" stroke="none" /><defs><linearGradient id="win" x1="0" y1="0" x2="1" y2="1"><stop stopColor="#4cc8f8" /><stop offset="1" stopColor="#0067c8" /></linearGradient></defs></Ico></AppButton>
          <TaskSearch><Search s={17} flip /><input placeholder="Search" aria-label="Search Windows" /><Zebra /></TaskSearch>
          <AppButton aria-label="Task view"><Ico w={24} h={24}><path d="M7 1h17v16H7z" fill="#f2f2f2" stroke="none" /><path d="M1 7h18v16H1z" fill="#222" stroke="none" /><path d="M7 7h12v10H7z" fill="#9a9a9a" stroke="none" /></Ico></AppButton>
          <AppButton aria-label="Copilot">
            <Ico w={26} h={24}>
              <defs>
                <linearGradient id="cpa" x1="0" y1="0" x2="0" y2="1"><stop stopColor="#1b8ff0" /><stop offset=".5" stopColor="#4cc36a" /><stop offset="1" stopColor="#f6b52b" /></linearGradient>
                <linearGradient id="cpb" x1="1" y1="0" x2="0" y2="1"><stop stopColor="#a25bf0" /><stop offset=".5" stopColor="#ec4f93" /><stop offset="1" stopColor="#ff8a3c" /></linearGradient>
              </defs>
              <path d="M8 1h8q2 0 2.500 2l.5 3h-4q-2 0-3 2.500l-3 8.500Q8 19 6 18H4q-4-1-3-5L4 4q1-3 4-3z" fill="url(#cpa)" stroke="none" />
              <path d="M18 23h-8q-2 0-2.500-2L7 18h4q2 0 3-2.500L17 7q1-2 3-1h2q4 1 3 5l-3 9q-1 3-4 3z" fill="url(#cpb)" stroke="none" />
              <path d="M14 1h2.500q2 0 2.500 3l.5 2H15q-1-1-1-5z" fill="#2350c8" stroke="none" />
            </Ico>
          </AppButton>
          <AppButton aria-label="Edge">
            <Ico w={24} h={24}>
              <defs><linearGradient id="eda" x1="0" y1="0" x2="1" y2="0"><stop stopColor="#2fa8e0" /><stop offset="1" stopColor="#54d36c" /></linearGradient><linearGradient id="edb" x1="0" y1="0" x2="0" y2="1"><stop stopColor="#1aa3df" /><stop offset="1" stopColor="#0c4f9f" /></linearGradient></defs>
              <circle cx="12" cy="12" r="12" fill="url(#edb)" stroke="none" />
              <path d="M0 11A12 12 0 0 1 24 11q0 5-5 6-4 0-4.500-1.500Q16 14 15.500 12 14 8 9 8 3 8 0 12z" fill="url(#eda)" stroke="none" />
              <path d="M12 12q0-2 1.500-2.500Q16 11 15 14.500 16 17 19 17q2 0 4-1.500-.5 2-1.500 3Q13 20 12 12z" fill="#d9d9d9" stroke="none" />
            </Ico>
          </AppButton>
          <AppButton aria-label="Store"><Ico w={24} h={24}><path d="M7 6V3q0-2 2-2h6q2 0 2 2v3" stroke="#35b5ef" strokeWidth="2" /><path d="M1 5h22v16q0 3-3 3H4q-3 0-3-3z" fill="#173d73" stroke="none" /><path d="M7 9h4.500v4.500H7z" fill="#f25022" stroke="none" /><path d="M12.500 9H17v4.500h-4.500z" fill="#7fba00" stroke="none" /><path d="M7 14.500h4.500V19H7z" fill="#00a4ef" stroke="none" /><path d="M12.500 14.500H17V19h-4.500z" fill="#ffb900" stroke="none" /></Ico></AppButton>
          <AppButton aria-label="WhatsApp"><Ico w={25} h={25}><path d="M1.500 23.500l1.700-6A11 10.700 0 1 1 7.500 21.900z" stroke="#24805a" strokeWidth="2.200" /><path d="M8 7l2-1 2 3-1 2q1.500 3 4 4l1.500-1.500 3 1.500q0 3-3 3-8-1-9.500-8Q7 8 8 7z" fill="#24805a" stroke="none" /></Ico></AppButton>
          <AppButton aria-label="Chrome"><ChromeIcon /></AppButton>
          <AppButton aria-label="File Explorer" $mark="#7b7b7b"><Ico w={26} h={24}><path d="M1 3q0-2 2-2h6l3 3v6H1z" fill="#d59a1c" stroke="none" /><path d="M1 6h11l3-3h8q2 0 2 2v15q0 2-2 2H3q-2 0-2-2z" fill="#fbcb45" stroke="none" /><path d="M5 22v-4q0-2 2-2h12q2 0 2 2v4z" fill="#1875c9" stroke="none" /></Ico></AppButton>
          <AppButton aria-label="Chrome profile" $mark="#7b7b7b"><ChromeIcon /><Badge>D</Badge></AppButton>
          <AppButton aria-label="Excel" $on $mark="#c1271e"><Ico w={25} h={24}><path d="M7 1h9v7H7z" fill="#21a366" stroke="none" /><path d="M16 1h9v7h-9z" fill="#33c481" stroke="none" /><path d="M7 8h9v8H7z" fill="#107c41" stroke="none" /><path d="M16 8h9v8h-9z" fill="#21a366" stroke="none" /><path d="M7 16h18v7H7z" fill="#185c37" stroke="none" /><path d="M0 6h13v13H0z" fill="#107c41" stroke="none" /><path d="M4 9l5 7M9 9l-5 7" stroke="#fff" strokeWidth="1.800" /></Ico></AppButton>
        </Apps>
        <Tray>
          <Plain $fixed={30} aria-label="Hidden icons"><Ico w={12} h={8}><path d="M1 7l5-5 5 5" strokeWidth="1.300" /></Ico></Plain>
          <Plain>ENG</Plain>
          <TrayPair aria-label="Network and volume">
            <Ico w={17} h={17}><path d="M11 2.500H1.500v10H13V8M4 16h8M6 13v3M9 13v3M12 1h4v5h-4zM14 6v9" stroke="#222" /></Ico>
            <Ico w={17} h={14}><path d="M1 5h3l4-4v12L4 9H1zM10.500 4.500q2 2.500 0 5" stroke="#222" /><path d="M13 3q3 4 0 8" stroke="#aaa" /></Ico>
          </TrayPair>
          <Clock>11:55<br />31/01/2026</Clock>
          <Plain aria-label="Notifications"><Ico w={14} h={16}><path d="M1 12V7q0-4 5-5h7v8l1 2zM5 13h4q-.5 2-2 2t-2-2z" fill="#1b1b1b" stroke="none" /><path d="M5 5h4L5 9.500h4" stroke="#fff" /></Ico></Plain>
        </Tray>
      </Taskbar>
    </Window>
  );
}
